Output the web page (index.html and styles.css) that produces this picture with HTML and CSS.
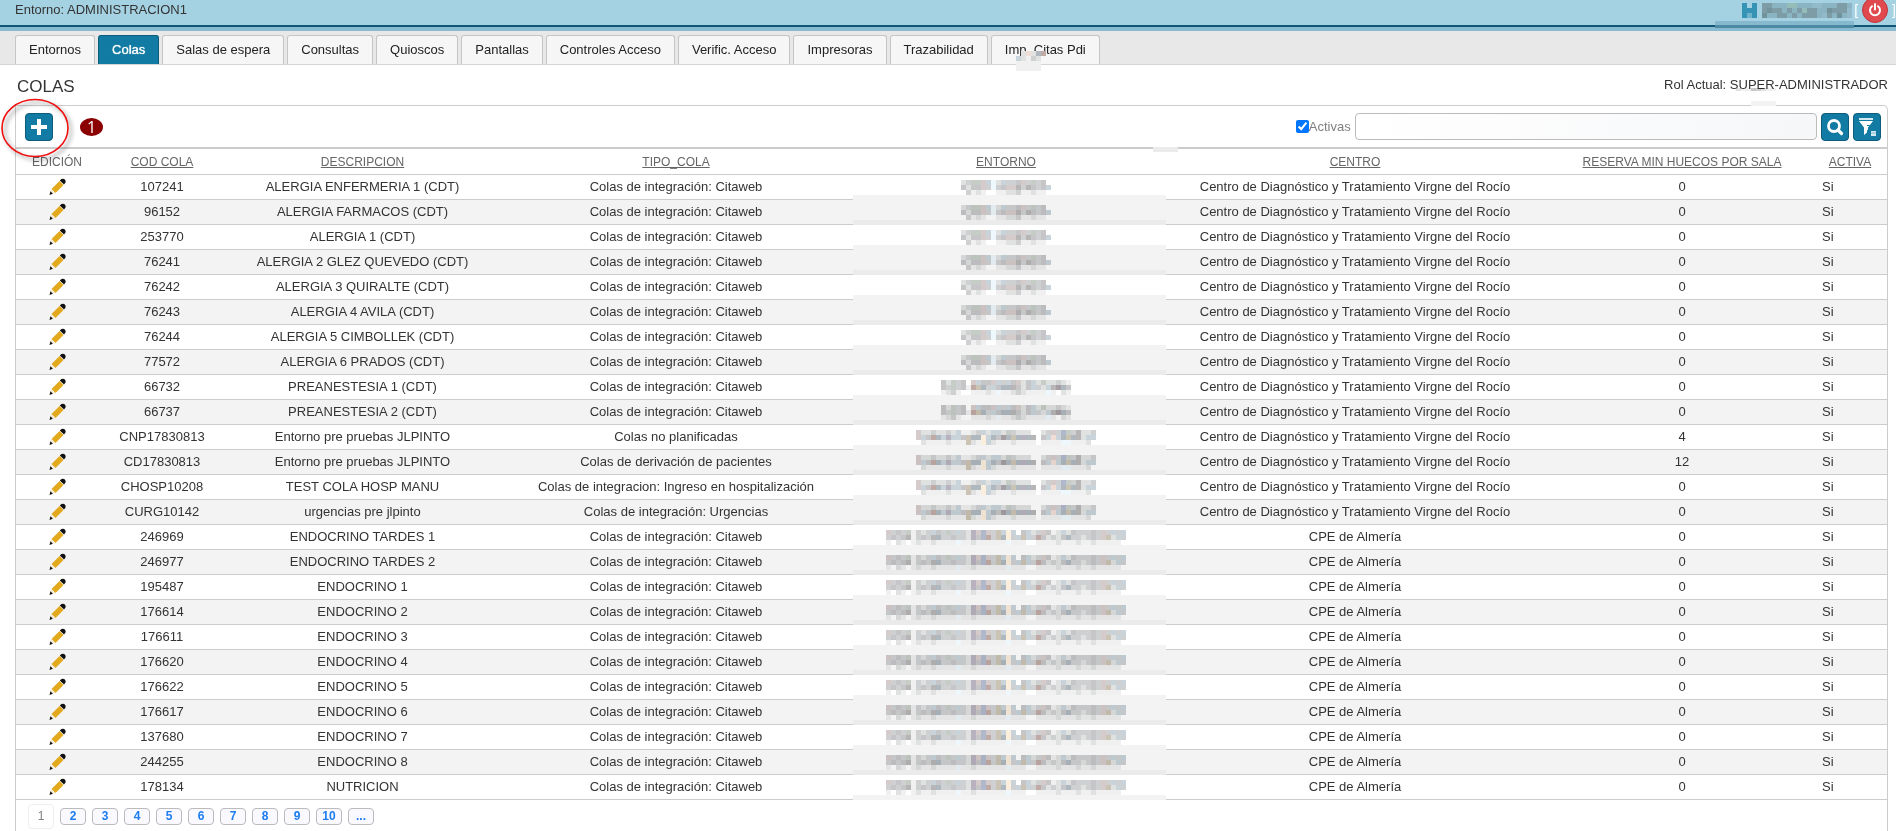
FILE: index.html
```html
<!DOCTYPE html>
<html lang="es">
    <head>
        <title>Colas</title>
        <meta charset="utf-8">
        <meta name="viewport" content="width=device-width, initial-scale=1.0">
        <link rel="stylesheet" href="styles.css">
    </head>
    <body>
        <header class="topbar">
            <span>Entorno: ADMINISTRACION1</span>
            <div class="user">
                <svg class="mosaic" data-name="usuario"></svg>
                <span>[</span>
                <button class="power" type="button" aria-label="Salir">
                    <svg width="14" height="14" viewBox="0 0 14 14"><path d="M4 3.2A5 5 0 1 0 10 3.2M7 1v5.5" fill="none" stroke="#fff" stroke-width="2" stroke-linecap="round"/></svg>
                </button>
                <span>]</span>
                <i class="user-shade"></i>
            </div>
        </header>

        <nav class="tabs">
            <a class="tab" href="#">Entornos</a>
            <a class="tab active" href="#">Colas</a>
            <a class="tab" href="#">Salas de espera</a>
            <a class="tab" href="#">Consultas</a>
            <a class="tab" href="#">Quioscos</a>
            <a class="tab" href="#">Pantallas</a>
            <a class="tab" href="#">Controles Acceso</a>
            <a class="tab" href="#">Verific. Acceso</a>
            <a class="tab" href="#">Impresoras</a>
            <a class="tab" href="#">Trazabilidad</a>
            <a class="tab" href="#">Imp. Citas Pdi<svg class="mosaic tab-patch" data-name="parche"></svg></a>
        </nav>

        <div class="title">
            <h1>COLAS</h1>
            <span class="role">Rol Actual: SUPER-ADMINISTRADOR<svg class="mosaic role-patch" data-name="rol"></svg></span>
        </div>

        <main class="panel">
            <i class="patch patch-top"></i>
            <div class="toolbar">
                <button class="button" type="button" aria-label="Nueva cola">
                    <svg width="16" height="16" viewBox="0 0 16 16"><path d="M8 0v16M0 8h16" stroke="#fff" stroke-width="4"/></svg>
                </button>
                <svg class="ring" width="76" height="68" viewBox="0 0 76 68"><ellipse cx="35" cy="31" rx="33" ry="28.5" fill="none" stroke="#f01010" stroke-width="1.6"/></svg>
                <span class="step">1</span>
                <div class="search">
                    <input class="check" id="activas" type="checkbox" checked>
                    <label for="activas">Activas</label>
                    <input class="text" type="text" aria-label="Buscar">
                    <button class="button" type="button" aria-label="Buscar">
                        <svg width="18" height="18" viewBox="0 0 18 18"><circle cx="8" cy="8" r="5.5" fill="none" stroke="#fff" stroke-width="2.8"/><path d="M12 12l3.5 3.5" stroke="#fff" stroke-width="3.2" stroke-linecap="round"/></svg>
                    </button>
                    <button class="button" type="button" aria-label="Quitar filtro">
                        <svg width="20" height="20" viewBox="0 0 20 20"><path d="M2 2h14" stroke="#d3e8f0" stroke-width="2"/><path d="M2 4h14l-5 6.500v2l-1 1v2L7 18v-7.500z" fill="#fff"/><path d="M10 8.500h2.500v3H11" fill="none" stroke="#127ba3"/><path d="M14 14h5v5h-5z" fill="#d3e8f0"/><path d="M14 16h5" stroke="#7fb9cf"/></svg>
                    </button>
                </div>
                <i class="patch patch-bottom"></i>
            </div>
            <table class="grid">
                <colgroup>
                    <col class="c-edit"><col class="c-cod"><col class="c-desc"><col class="c-tipo"><col class="c-ent"><col class="c-centro"><col class="c-res"><col class="c-act">
                </colgroup>
                <thead>
                    <tr>
                        <th>EDICIÓN</th>
                        <th><a href="#">COD COLA</a></th>
                        <th><a href="#">DESCRIPCION</a></th>
                        <th><a href="#">TIPO_COLA</a></th>
                        <th><a href="#">ENTORNO</a></th>
                        <th><a href="#">CENTRO</a></th>
                        <th><a href="#">RESERVA MIN HUECOS POR SALA</a></th>
                        <th><a href="#">ACTIVA</a></th>
                    </tr>
                </thead>
                <tbody id="rows"></tbody>
            </table>
            <nav class="pager">
                <span class="page current">1</span>
                <a class="page" href="#">2</a>
                <a class="page" href="#">3</a>
                <a class="page" href="#">4</a>
                <a class="page" href="#">5</a>
                <a class="page" href="#">6</a>
                <a class="page" href="#">7</a>
                <a class="page" href="#">8</a>
                <a class="page" href="#">9</a>
                <a class="page" href="#">10</a>
                <a class="page" href="#">...</a>
            </nav>
        </main>
        <script src="colas.js"></script>
    </body>
</html>
```
FILE: styles.css
```css
* {
    box-sizing: border-box;
}
body {
    margin: 0;
    min-height: 100vh;
    display: flex;
    flex-direction: column;
    background-color: #fff;
    color: #333;
    font-family: "Liberation Sans", Arial, sans-serif;
    font-size: 13px;
    overflow-x: hidden;
}
button {
    padding: 0;
    cursor: pointer;
}
.mosaic {
    display: block;
    mix-blend-mode: multiply;
}

/* cabecera */
.topbar {
    display: flex;
    justify-content: space-between;
    height: 31px;
    padding-left: 15px;
    line-height: 20px;
    background: linear-gradient(#a4d2e2 25px, #0f5672 25px, #0f5672 27px, #87bcd0 27px);
}
.user {
    position: relative;
    display: flex;
    gap: 2px;
    height: 20px;
    align-items: center;
    color: #fff;
    font-size: 14px;
}
.user .mosaic {
    mix-blend-mode: normal;
}
.power {
    display: flex;
    align-items: center;
    justify-content: center;
    width: 26px;
    height: 26px;
    margin: 0 2px;
    border: 1px solid #c1343a;
    border-radius: 50%;
    background-color: #e04a4e;
}
.user-shade {
    position: absolute;
    right: 42px;
    top: 21px;
    width: 139px;
    height: 7px;
    background: linear-gradient(#87b9ce 4px, #4d89a3 4px);
}

/* pestañas */
.tabs {
    display: flex;
    gap: 3px;
    height: 34px;
    padding: 4px 15px 0;
    background-color: #e8e8e8;
    border-bottom: 1px solid #d4d4d4;
}
.tab {
    position: relative;
    padding: 0 13px;
    border: 1px solid #c5c5c5;
    border-bottom: 0;
    border-radius: 3px 3px 0 0;
    background-color: #f6f6f6;
    color: #222;
    line-height: 28px;
    text-decoration: none;
    white-space: nowrap;
}
.tab.active {
    border-color: #0c5c7a;
    background-color: #127ba3;
    color: #fff;
    text-shadow: 0 0 1px #fff;
}
.tab-patch {
    position: absolute;
    left: 24px;
    top: 15px;
    mix-blend-mode: normal;
}

.title {
    display: flex;
    justify-content: space-between;
    height: 40px;
    padding: 0 8px 0 17px;
}
h1 {
    margin: 0;
    font-size: 17px;
    font-weight: normal;
    line-height: 43px;
}
.role {
    position: relative;
    line-height: 40px;
}
.role-patch {
    position: absolute;
    right: 112px;
    top: 23px;
}

/* panel */
.panel {
    position: relative;
    flex: 1;
    margin: 0 8px 0 15px;
    border: 1px solid #ccc;
    border-bottom: 0;
    border-radius: 0 5px 0 0;
}
.patch {
    position: absolute;
    width: 25px;
    height: 5px;
    background-color: #ebebeb;
}
.patch-top {
    right: 111px;
    top: -5px;
    background-color: #f3f3f3;
}
.patch-bottom {
    right: 709px;
    bottom: -5px;
}
.toolbar {
    position: relative;
    display: flex;
    align-items: center;
    height: 43px;
    padding: 0 6px 0 9px;
    border-bottom: 2px solid #ccc;
}
.button {
    display: flex;
    flex: none;
    align-items: center;
    justify-content: center;
    width: 28px;
    height: 28px;
    border: 1px solid #0c5c7a;
    border-radius: 4px;
    background-color: #127ba3;
}
.ring {
    position: absolute;
    left: -16px;
    top: -9px;
    z-index: 1;
    filter: drop-shadow(3px 3px 2px rgba(0, 0, 0, 0.45));
}
.step {
    width: 23px;
    height: 18px;
    margin-left: 27px;
    border-radius: 50%;
    background-color: #8b0000;
    color: #fff;
    font-family: "Open Sans", sans-serif;
    font-size: 16px;
    line-height: 18px;
    text-align: center;
}
.search {
    display: flex;
    flex: 1;
    align-items: center;
    justify-content: flex-end;
    gap: 4px;
    color: #808080;
}
.check {
    width: 13px;
    height: 13px;
    margin: 0 -4px 0 0;
}
.text {
    width: 26%;
    height: 27px;
    border: 1px solid #bbb;
    border-radius: 4px;
    background: linear-gradient(90deg, #fff, #f6f7f9);
}

/* tabla */
.grid {
    width: 100%;
    table-layout: fixed;
    border-collapse: separate;
    border-spacing: 0;
    text-align: center;
}
.c-edit { width: 82px; }
.c-cod { width: 128px; }
.c-desc { width: 273px; }
.c-tipo { width: 354px; }
.c-ent { width: 306px; }
.c-centro { width: 392px; }
.c-res { width: 262px; }
.grid th {
    height: 26px;
    padding: 0;
    border-bottom: 1px solid #ccc;
    color: #666;
    font-size: 12px;
    font-weight: normal;
}
.grid th a {
    color: #666;
}
.grid td {
    height: 25px;
    padding: 0 0 2px;
    border-bottom: 1px solid #ccc;
    white-space: nowrap;
}
.grid tbody tr:nth-child(even) {
    background-color: #f3f3f3;
}
.grid .td-act {
    padding-left: 9px;
    text-align: left;
}
.grid .td-ent {
    position: relative;
    vertical-align: top;
    padding-top: 5px;
}
.td-ent .mosaic {
    margin: 0 auto;
}
.td-ent::after {
    content: "";
    position: absolute;
    left: 0;
    right: -7px;
    bottom: -1px;
    height: 5px;
    background-color: #f3f3f3;
}
tr:nth-child(even) .td-ent::after {
    background-color: #ebebeb;
}
.pencil {
    display: block;
    margin: 0 auto;
}

/* paginador */
.pager {
    display: flex;
    align-items: center;
    gap: 6px;
    padding: 4px 12px 0;
}
.page {
    width: 26px;
    height: 17px;
    border: 1px solid #bbb;
    border-radius: 4px;
    background-color: #f9f9ff;
    color: #1c7cf0;
    font-size: 12px;
    font-weight: bold;
    line-height: 15px;
    text-align: center;
    text-decoration: none;
}
.page.current {
    height: 25px;
    border-color: #eee;
    background-color: #fff;
    color: #808080;
    font-weight: normal;
    line-height: 23px;
}
```
FILE: colas.js
```js
var CDT = "Centro de Diagnóstico y Tratamiento Virgne del Rocío";
var CPE = "CPE de Almería";
var CITAWEB = "Colas de integración: Citaweb";

// codigo, descripcion, tipo, entorno, centro, reserva
var colas = [
    ["107241", "ALERGIA ENFERMERIA 1 (CDT)", CITAWEB, "alergia", CDT, 0],
    ["96152", "ALERGIA FARMACOS (CDT)", CITAWEB, "alergia", CDT, 0],
    ["253770", "ALERGIA 1 (CDT)", CITAWEB, "alergia", CDT, 0],
    ["76241", "ALERGIA 2 GLEZ QUEVEDO (CDT)", CITAWEB, "alergia", CDT, 0],
    ["76242", "ALERGIA 3 QUIRALTE (CDT)", CITAWEB, "alergia", CDT, 0],
    ["76243", "ALERGIA 4 AVILA (CDT)", CITAWEB, "alergia", CDT, 0],
    ["76244", "ALERGIA 5 CIMBOLLEK (CDT)", CITAWEB, "alergia", CDT, 0],
    ["77572", "ALERGIA 6 PRADOS (CDT)", CITAWEB, "alergia", CDT, 0],
    ["66732", "PREANESTESIA 1 (CDT)", CITAWEB, "preanestesia", CDT, 0],
    ["66737", "PREANESTESIA 2 (CDT)", CITAWEB, "preanestesia", CDT, 0],
    ["CNP17830813", "Entorno pre pruebas JLPINTO", "Colas no planificadas", "pruebas", CDT, 4],
    ["CD17830813", "Entorno pre pruebas JLPINTO", "Colas de derivación de pacientes", "pruebas", CDT, 12],
    ["CHOSP10208", "TEST COLA HOSP MANU", "Colas de integracion: Ingreso en hospitalización", "pruebas", CDT, 0],
    ["CURG10142", "urgencias pre jlpinto", "Colas de integración: Urgencias", "pruebas", CDT, 0],
    ["246969", "ENDOCRINO TARDES 1", CITAWEB, "cpe", CPE, 0],
    ["246977", "ENDOCRINO TARDES 2", CITAWEB, "cpe", CPE, 0],
    ["195487", "ENDOCRINO 1", CITAWEB, "cpe", CPE, 0],
    ["176614", "ENDOCRINO 2", CITAWEB, "cpe", CPE, 0],
    ["176611", "ENDOCRINO 3", CITAWEB, "cpe", CPE, 0],
    ["176620", "ENDOCRINO 4", CITAWEB, "cpe", CPE, 0],
    ["176622", "ENDOCRINO 5", CITAWEB, "cpe", CPE, 0],
    ["176617", "ENDOCRINO 6", CITAWEB, "cpe", CPE, 0],
    ["137680", "ENDOCRINO 7", CITAWEB, "cpe", CPE, 0],
    ["244255", "ENDOCRINO 8", CITAWEB, "cpe", CPE, 0],
    ["178134", "NUTRICION", CITAWEB, "cpe", CPE, 0]
];

var colores = {
    a: "#f0f0f0", b: "#e0e1e1", c: "#cfd0d1", d: "#c6c5c7", e: "#b8b5b7",
    g: "#c6cdc6", p: "#d5cbcb", r: "#c0aaa6", y: "#cbc3b3", o: "#fbeedd",
    l: "#eef8fc", u: "#c8d3da", v: "#aeb8be", m: "#b8b2be", w: "#f0ddd6",
    n: "#a59fa3", z: "#b0b9cc",
    H: "#3593b5", h: "#6fb4cb", I: "#8ab4c2", J: "#7d9ca5", K: "#72929c", L: "#94bcb9", M: "#92bacb"
};

// cada letra es un cuadro de 5x5
var mosaicos = {
    alergia: [
        "bcggpulbuccdpcgcd.",
        "dbddpclcdppecedcdu",
        ".caba..aabbcaabaa."
    ],
    preanestesia: [
        "dbgcd.puddpucudpbdubgbbcba",
        "dcgcdaryvcudvvedbducbuenvd",
        "abca..aaabalaabcbaaaala.ba"
    ],
    pruebas: [
        "pbbcbbcbuaabcubuubgcbbb..bcpczgcebbc",
        "pudrvumuudyvvouvdnvyvmve.duwuvyvebuu",
        ".baaaabaaaybaoubaaabaaaa.aaaallaaab."
    ],
    cpe: [
        "pcdcgacbcudcgcucbmpzpcyuou.dubcpdabubdcccdcpcucu",
        "cdcdeacdcevccdccbmdzrcyvocuyucrdbcbdvccbcdcpybuc",
        "a.ba.abaabaaaalaabaaaaaalaaa..aaaabaaabaabaaaaa."
    ],
    usuario: [
        "H.HaJJIIILLIIIMMIIIJJI",
        "HHH.JKJJIJIJLJJIIKJJJM",
        "HhH.KIIJJIJIJJJIMJIKIM"
    ],
    parche: [
        ".bwbvr.",
        "ubacb..",
        "aaaaa..",
        "aaaaa.."
    ],
    rol: [
        "baadcbaa"
    ]
};
mosaicos.usuario[0] = "H.H.JJIIILLIIIMMIIIJJI";

function mosaico(svg, nombre) {
    var filas = mosaicos[nombre];
    var alto = nombre == "rol" ? 3 : 5;
    var html = "";
    for (var y = 0; y < filas.length; y++) {
        for (var x = 0; x < filas[y].length; x++) {
            var color = colores[filas[y][x]];
            if (color)
                html += '<rect x="' + x * 5 + '" y="' + y * alto + '" width="5" height="' + alto + '" fill="' + color + '"/>';
        }
    }
    svg.setAttribute("width", filas[0].length * 5);
    svg.setAttribute("height", filas.length * alto);
    svg.setAttribute("shape-rendering", "crispEdges");
    svg.innerHTML = html;
}

var lapiz = '<svg class="pencil" width="17" height="17" viewBox="0 0 17 17">' +
    '<path d="M2.500 11L10.500 3l4 4L6.500 15z" fill="#e2a91d"/>' +
    '<path d="M10.800 2.500l1.700-1.500q2-.800 3.300.500t.600 3.200L15 6.500z" fill="#111"/>' +
    '<path d="M2.200 11.500l3.500 3.500L.800 16.500z" fill="#f6ead0"/>' +
    '<path d="M1.400 13.200l2.500 2.500L.500 16.900z" fill="#111"/></svg>';

var filas = "";
for (var i = 0; i < colas.length; i++) {
    var c = colas[i];
    filas += "<tr><td>" + lapiz + "</td><td>" + c[0] + "</td><td>" + c[1] + "</td><td>" + c[2] +
        '</td><td class="td-ent"><svg class="mosaic" data-name="' + c[3] + '"></svg></td><td>' +
        c[4] + "</td><td>" + c[5] + '</td><td class="td-act">Si</td></tr>';
}
document.getElementById("rows").innerHTML = filas;

var lista = document.querySelectorAll(".mosaic");
for (var j = 0; j < lista.length; j++)
    mosaico(lista[j], lista[j].getAttribute("data-name"));
```
